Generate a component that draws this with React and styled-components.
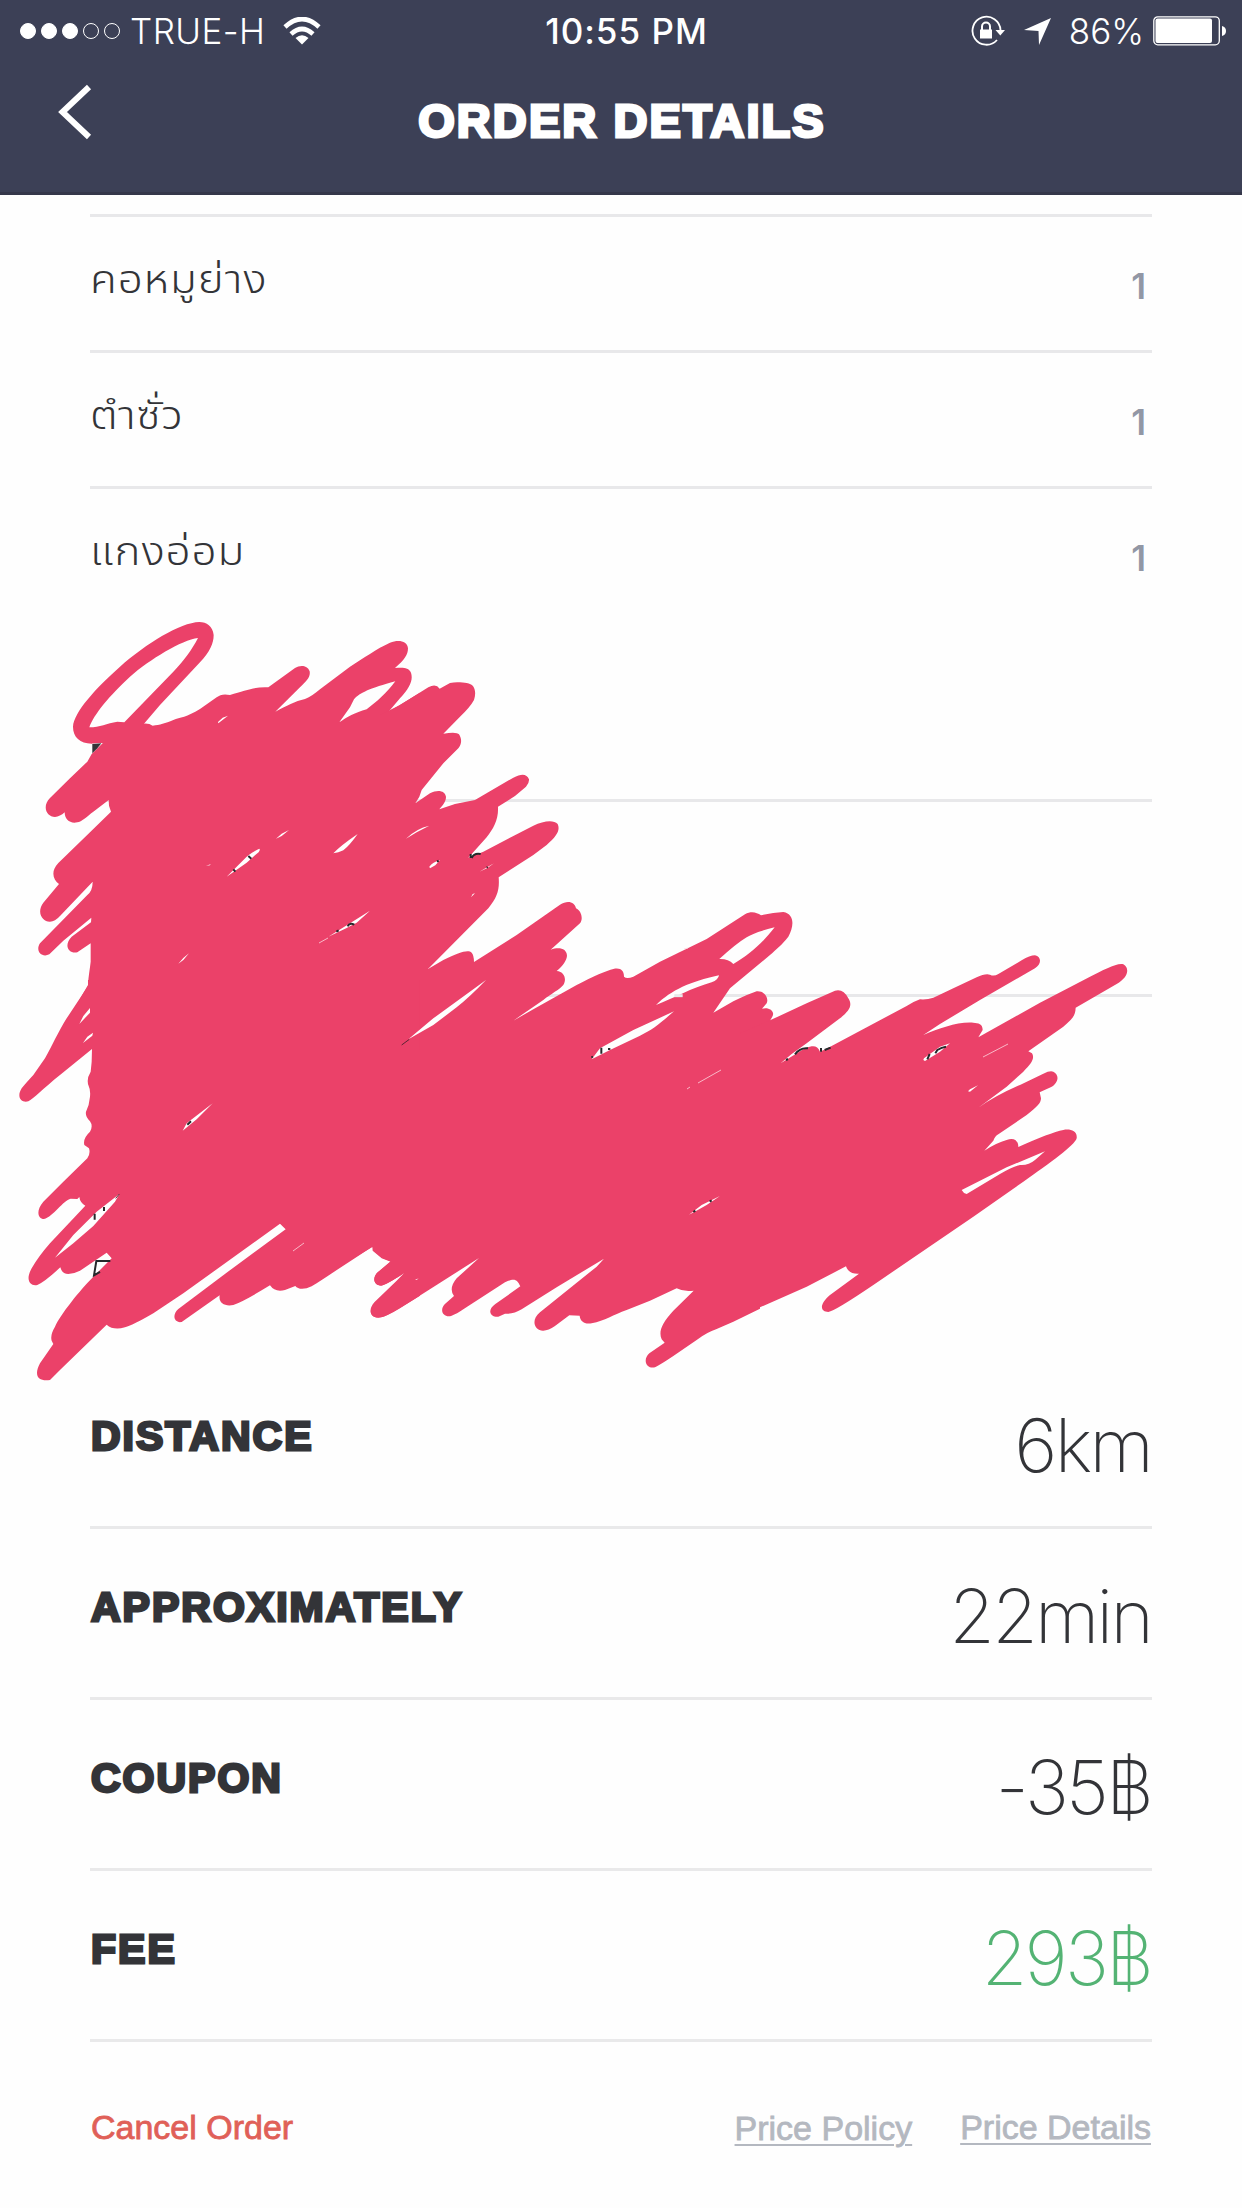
import React from "react";
import styled, { createGlobalStyle } from "styled-components";

const Global = createGlobalStyle`
  * { box-sizing: border-box; }
  body { margin: 0; background: #fefefe; }
`;

const Screen = styled.div`
  position: relative;
  width: 1242px;
  height: 2208px;
  overflow: hidden;
  background: #fefefe;
  color: #333438;
  font-family: "Inter", "Liberation Sans", sans-serif;
`;

const Header = styled.header`
  height: 195px;
  background: #3c4056;
  border-bottom: 3px solid #35374a;
  color: #fff;
`;

const StatusBar = styled.div`
  display: grid;
  grid-template-columns: 1fr auto 1fr;
  align-items: center;
  height: 62px;
  padding: 0 15px 0 20px;
`;

const StatusGroup = styled.div`
  display: flex;
  align-items: center;
  justify-content: ${(p) => (p.$end ? "flex-end" : "flex-start")};
`;

const Signal = styled.div`
  display: flex;
  gap: 5px;
  margin-right: 10px;
`;

const Dot = styled.i`
  width: 16px;
  height: 16px;
  border-radius: 50%;
  border: 1px solid #fff;
  background: ${(p) => (p.$on ? "#fff" : "transparent")};
`;

const StatusText = styled.span`
  display: block;
  font-size: 35px;
  line-height: 62px;
  white-space: nowrap;
  font-weight: ${(p) => p.$weight || 330};
  letter-spacing: ${(p) => p.$track || 0}px;
  margin-right: ${(p) => p.$after || 0}px;
  padding-left: ${(p) => p.$before || 0}px;
`;

const Icon = styled.svg`
  display: block;
  flex: none;
  margin-right: ${(p) => p.$after || 0}px;
`;

const TitleBar = styled.div`
  display: grid;
  grid-template-columns: 120px 1fr 120px;
  align-items: start;
  height: 130px;
`;

const Back = styled.button`
  display: block;
  padding: 20px 0 0 56px;
  border: 0;
  background: none;
`;

const Title = styled.h1`
  margin: 0;
  text-align: center;
  font-family: "Liberation Sans", Arial, sans-serif;
  font-size: 47px;
  line-height: 60px;
  padding: 29px 0 0 2px;
  font-weight: 700;
  letter-spacing: 2.1px;
  -webkit-text-stroke: 3px currentColor;
  white-space: nowrap;
`;

const Content = styled.main`
  display: flex;
  flex-direction: column;
  padding: 19px 90px 0;
`;

const Item = styled.div`
  display: flex;
  justify-content: space-between;
  height: 136px;
  border-top: 3px solid #e8e8ea;
`;

const ItemName = styled.span`
  font-family: "Noto Sans Thai", "Noto Sans", sans-serif;
  font-size: 40px;
  font-weight: 360;
  line-height: 60px;
  padding-top: 34px;
  letter-spacing: 0.8px;
  transform: scaleX(1.1);
  transform-origin: left;
`;

const ItemCount = styled.span`
  font-size: 35px;
  line-height: 60px;
  padding: 39px 6px 0 0;
  font-weight: 600;
  color: #9297a5;
`;

const Blank = styled.div`
  height: ${(p) => p.$h}px;
  border-bottom: ${(p) => (p.$line ? "3px solid #e8e8ea" : "0")};
`;

const Summary = styled.div`
  display: flex;
  justify-content: space-between;
  height: 171px;
  border-bottom: 3px solid #e9e9ea;
`;

const Label = styled.span`
  font-family: "Liberation Sans", Arial, sans-serif;
  font-size: 41px;
  line-height: 60px;
  padding: 48px 0 0 1px;
  font-weight: 700;
  white-space: nowrap;
  letter-spacing: 2px;
  -webkit-text-stroke: 2.8px currentColor;
`;

const Value = styled.span`
  font-size: 74px;
  line-height: 90px;
  padding: 42px 1px 0 0;
  font-weight: 240;
  white-space: nowrap;
  color: ${(p) => (p.$green ? "#54b374" : "#333438")};
  letter-spacing: -2.8px;
`;

const Footer = styled.footer`
  display: flex;
  align-items: flex-start;
  padding: 55px 1px 0;
  font-family: "Liberation Sans", sans-serif;
  font-size: 34px;
  line-height: 60px;
`;

const Cancel = styled.a`
  flex: 1;
  color: #e06058;
  -webkit-text-stroke: 0.8px currentColor;
`;

const Link = styled.a`
  margin-left: ${(p) => p.$gap || 0}px;
  padding-top: ${(p) => p.$drop || 0}px;
  color: #b4b8c0;
  text-decoration: underline;
  text-decoration-thickness: 2px;
  text-underline-offset: 4px;
  -webkit-text-stroke: 0.8px currentColor;
`;

const Overlay = styled.svg`
  position: absolute;
  left: 0;
  top: 0;
  pointer-events: none;
`;

const patches = [
  {
    x: 0, y: 600,
    shape:
      "M1260 278L1165 336L1200 295C1230 262 1240 240 1233 218C1225 200 1205 203 1185 204C1213 180 1224 165 1224 145C1222 122 1195 118 1170 128C1130 146 1090 175 1050 200L960 268C945 280 930 292 915 297C885 303 860 318 826 335L900 262C920 243 932 232 929 214C922 195 900 195 885 204L805 262C765 260 740 270 690 285C672 281 660 284 650 292L600 327C560 352 540 352 520 360C495 370 480 375 458 377Q448 370 432 371L480 315L600 187C630 155 641 130 641 105C638 78 620 66 598 66C540 68 440 130 360 200C290 262 222 335 219 380C219 412 240 430 275 431L308 429L275 462L262 485L210 535L150 594C125 620 140 650 165 651Q180 650 194 637C194 658 210 672 232 667C245 665 260 650 280 635L326 600L327 617L333 635L270 697L175 789C152 813 158 838 177 852L130 908C108 938 128 966 150 965Q165 965 180 948L278 845Q278 872 262 885L120 1030C105 1052 125 1075 148 1063L190 1022L274 953L273 967L215 1010C190 1036 205 1062 232 1057L272 1030V1085C270 1105 265 1130 264 1155L238 1200H1235V400Z",
  },
  {
    x: 400, y: 600,
    shape:
      "M-60 345L0 315L85 262Q108 250 119 266L150 249C170 244 190 248 200 249C225 252 230 275 222 300Q210 322 180 350L130 401Q170 394 177 403C188 420 183 435 175 445L130 490L65 570L58 590L46 610L90 580C115 567 135 573 138 590C138 605 130 612 118 628L165 612L225 600L340 533C365 520 380 521 387 538Q388 550 378 560L345 588L294 620C296 660 280 685 260 712L205 773L250 755L400 677C430 663 460 658 473 672C481 690 472 708 440 735L400 765L296 832C299 870 292 892 265 925L84 1107L130 1080C180 1055 205 1048 215 1058Q222 1066 222 1086L350 1005L480 914C505 898 525 908 528 925C545 933 550 958 540 970L452 1049C480 1040 500 1047 501 1067C500 1080 490 1097 470 1113C495 1115 500 1140 490 1155C480 1168 455 1180 430 1200L340 1262L400 1228L530 1155C580 1129 620 1112 640 1107C662 1102 672 1112 672 1130Q680 1138 700 1130L780 1085L920 1017L1035 943C1055 932 1070 938 1083 946Q1120 938 1150 936C1185 942 1182 980 1165 1010C1145 1035 1130 1047 1110 1065L990 1165L940 1238L1000 1204Q1050 1180 1070 1174C1095 1172 1107 1195 1100 1210L1086 1226C1105 1220 1125 1232 1118 1248L1110 1262V1500H-60Z",
  },
  {
    x: 0, y: 980,
    shape:
      "M264 0V18L200 115C175 155 155 200 135 235L100 285Q75 312 65 325C48 352 65 370 85 364C100 357 130 325 180 285L276 207L275 245L272 275Q258 298 266 318Q272 330 270 350Q268 375 258 395Q255 410 270 424Q280 438 270 455Q248 475 253 495L267 505Q272 520 262 535L190 605L130 665C108 690 112 716 132 717C160 710 190 660 212 656L232 657L238 651Q240 668 256 677L150 790Q115 830 95 865C75 900 90 920 112 915Q135 905 181 862Q186 882 205 882Q225 880 240 872L320 818L335 835L280 890C240 930 180 1005 165 1040Q150 1065 155 1082L160 1092L120 1150C100 1188 115 1205 150 1200L180 1170L320 1034Q340 1052 375 1042Q400 1035 460 1000L550 940L840 731L857 748L700 863L535 987C515 1005 522 1030 545 1026L659 946C655 970 675 980 700 975Q730 965 810 916Q825 938 855 930L886 918Q895 930 920 925C940 918 960 902 980 890L1117 800L1118 812L1145 835L1172 845L1130 880C1115 900 1125 918 1145 916Q1160 913 1215 878L1190 905L1125 970C1100 995 1115 1018 1145 1012Q1170 1003 1260 947V0Z",
  },
  {
    x: 340, y: 1050,
    shape:
      "M0 0V648L98 590L100 600L125 623L152 634L113 667C95 685 103 708 125 707Q145 702 195 667L170 692L103 757C80 783 95 806 120 802Q140 800 180 775L417 624L350 685Q325 715 342 738L314 763C295 785 315 805 335 797Q350 792 370 778L495 697C525 682 532 690 541 709L466 762C440 780 450 802 475 800L495 791Q520 793 545 778L650 712L792 626L770 650L600 787C570 812 585 843 610 842Q625 842 645 828L688 796L719 797C720 812 732 824 755 820C795 812 820 794 860 780L930 752L1010 715Q1030 726 1061 722L1000 782C965 820 955 845 965 868L974 878L928 910C905 932 922 958 945 952Q955 948 1000 918L1070 870Q1100 847 1130 837L1180 815L1260 776V0Z",
  },
  {
    x: 740, y: 900,
    shape:
      "M0 400V1253L60 1222L200 1160L318 1099C325 1118 340 1122 357 1121L270 1185C235 1215 242 1236 265 1236Q285 1233 400 1155L700 950L850 845C930 790 1005 735 1010 715C1013 692 990 686 970 690Q930 698 835 741C835 720 820 712 800 720Q770 728 733 752L760 722Q765 708 775 703L860 645C890 622 903 610 903 595L899 577L932 562C955 550 960 525 940 515Q930 511 910 521L840 555Q770 585 715 623L800 560L850 515C875 490 885 475 876 460L865 454L970 380C1000 355 1006 345 1007 323L1130 252C1165 232 1170 205 1150 193C1130 188 1090 211 1050 230L900 308L715 412L728 390C728 370 715 370 700 368C650 365 600 385 550 405L600 372L720 300L885 205C905 193 905 170 885 166Q870 166 845 181L775 222Q762 230 750 224Q735 220 710 232L640 265L580 293Q560 300 540 298Q520 305 500 318L265 443L240 455Q232 436 215 439Q205 440 190 448L122 490L155 462L200 430L300 355C330 330 338 315 325 295Q310 265 285 272L200 310L90 361Z",
  },
];

const gaps = [
  {
    x: 0, y: 600,
    shape:
      "M268 382C280 345 330 285 390 230C450 178 545 120 594 114C575 150 555 178 520 215L373 367L352 365C320 370 300 382 268 382ZM1018 367L1050 322L1062 298C1080 278 1110 265 1186 244C1160 280 1130 305 1100 328C1065 338 1040 352 1018 367ZM654 366L668 353L684 347L655 370ZM828 716L845 701L867 690L845 708ZM680 830L740 770Q770 748 778 746Q784 752 765 766L740 788ZM1000 760Q1020 738 1073 702Q1050 735 1030 751Q1015 758 1000 760ZM618 797L632 793L630 796ZM985 1010L1050 970L1110 932L1070 968L1040 984ZM535 1091Q550 1072 567 1060L550 1080ZM276 431L308 429L276 460Z",
    marks: "M745 768L754 776M700 808L706 815M1009 995L1016 991M1043 979Q1048 967 1063 974",
    solid: "M277 432L304 430L292 445L277 460Z",
  },
  {
    x: 400, y: 600,
    shape:
      "M958 1077Q1010 1030 1040 1012Q1060 998 1124 982C1085 1032 1050 1062 1000 1092Q985 1076 958 1077ZM768 1215C815 1170 870 1145 957 1126Q955 1140 935 1147C880 1162 820 1195 768 1215ZM575 1378L600 1345L700 1290L822 1234C780 1270 760 1288 720 1307L630 1350ZM25 1318L100 1255L258 1140Q210 1190 170 1222L100 1275ZM18 716Q50 685 88 677L50 697ZM88 800Q98 787 120 780L106 796L90 805ZM238 815L282 790L262 804ZM213 892L218 882L225 880Z",
    marks: "M604 1343V1361M624 1347H631M574 1372L579 1370M112 781L115 786M212 762V774M215 774Q222 758 242 762M260 803L263 801",
    fine: "M5 1335L28 1318",
    line: "M823 1187H848",
  },
  {
    x: 0, y: 980,
    shape:
      "M238 132L250 108L270 84V98ZM249 189L262 170L279 158L277 167ZM548 452L560 430L638 370L590 418ZM165 833L220 765L290 695L358 642L345 665L280 738L220 790Z",
    marks: "M562 434L573 424M284 701V719M312 681V693M331 843H289L282 886L300 876",
    fine: "M347 655L358 642",
  },
  {
    x: 340, y: 1050,
    shape: "M1047 494L1085 465L1140 438L1100 465L1068 483ZM225 690L236 685L230 690Z",
    marks: "M1060 486L1066 482M1109 455L1115 451",
  },
  {
    x: 740, y: 900,
    shape:
      "M665 870L800 802L915 754L885 780Q865 797 840 795Q820 798 780 822L680 882Q670 880 665 870ZM550 480L552 475L600 440L630 430L600 455L555 483ZM684 574L690 568L714 556L690 575Z",
    marks: "M562 478L569 462M586 460L592 450Q605 442 618 440M165 463Q180 442 204 445M138 480L144 477M243 444V455M254 450L272 443",
  },
];

const hairlines =
  "M688 948L684 949M319 943L328 938M293 1251L304 1243M983 1057L1008 1044M698 1083L721 1070M687 1089L690 1087";

const Scribble = () => (
  <Overlay width="1242" height="2208" viewBox="0 0 1242 2208">
    {patches.map((p, i) => (
      <path key={i} d={p.shape} fill="#eb4169" transform={`translate(${p.x} ${p.y}) scale(.33333)`} />
    ))}
    {gaps.map((g, i) => (
      <g key={i} transform={`translate(${g.x} ${g.y}) scale(.33333)`} fill="none">
        <path d={g.shape} fill="#fefefe" />
        {g.line && <path d={g.line} stroke="#e8e8ea" strokeWidth="9" />}
        {g.solid && <path d={g.solid} fill="#333438" />}
        {g.fine && <path d={g.fine} stroke="#5a2433" strokeWidth="3" />}
        <path d={g.marks} stroke="#26292c" strokeWidth="6" />
      </g>
    ))}
    <path d={hairlines} stroke="#fbd5de" strokeWidth=".8" fill="none" />
  </Overlay>
);

const items = ["คอหมูย่าง", "ตำซั่ว", "แกงอ่อม"];

const totals = [
  { label: "DISTANCE", value: "6km" },
  { label: "APPROXIMATELY", value: "22min" },
  { label: "COUPON", value: "-35฿" },
  { label: "FEE", value: "293฿", green: true },
];

export default function App() {
  return (
    <Screen>
      <Global />
      <Header>
        <StatusBar>
          <StatusGroup>
            <Signal>
              {[1, 1, 1, 0, 0].map((on, i) => (
                <Dot key={i} $on={on} />
              ))}
            </Signal>
            <StatusText $after={18} $track={0.4}>TRUE-H</StatusText>
            <Icon width="38" height="28" viewBox="0 0 38 28" fill="none" stroke="#fff">
              <path d="M2 10Q19 -6 36 10" strokeWidth="4.6" />
              <path d="M8 17Q19 7 30 17" strokeWidth="4.6" />
              <path d="M12.500 21Q19 15.500 25.500 21L19 27.500Z" fill="#fff" stroke="none" />
            </Icon>
          </StatusGroup>
          <StatusText $weight={500} $track={1} $before={6}>10:55 PM</StatusText>
          <StatusGroup $end>
            <Icon $after={19} width="34" height="32" viewBox="0 0 34 32" fill="none" stroke="#fff" strokeWidth="1.8">
              <path d="M29.500 15A14 14 0 1 0 26 25" />
              <path d="M24.500 15H34L29.300 20.500Z" fill="#fff" stroke="none" />
              <path d="M9 14.500H21V23.500H9Z" fill="#fff" stroke="none" />
              <path d="M11 15V11.500A4 4 0 0 1 19 11.500V15" strokeWidth="2" />
            </Icon>
            <Icon $after={18} width="27" height="27" viewBox="0 0 27 27">
              <path d="M27 0L15 27L14.500 13L0 12Z" fill="#fff" />
            </Icon>
            <StatusText $after={9}>86%</StatusText>
            <Icon width="74" height="30" viewBox="0 0 74 30">
              <rect x=".8" y=".8" width="65.500" height="28" rx="4" fill="none" stroke="#fff" strokeWidth="1.3" />
              <rect x="2.500" y="2.500" width="56.500" height="24.600" rx="2" fill="#fff" />
              <path d="M69 10Q73 11 73 15T69 20Z" fill="#fff" />
            </Icon>
          </StatusGroup>
        </StatusBar>
        <TitleBar>
          <Back aria-label="Back">
            <Icon width="38" height="60" viewBox="0 0 38 60">
              <path d="M33 5L6.500 30L33 55" fill="none" stroke="#fff" strokeWidth="6" />
            </Icon>
          </Back>
          <Title>ORDER DETAILS</Title>
        </TitleBar>
      </Header>
      <Content>
        {items.map((name) => (
          <Item key={name}>
            <ItemName>{name}</ItemName>
            <ItemCount>1</ItemCount>
          </Item>
        ))}
        <Blank $h={180} $line />
        <Blank $h={195} $line />
        <Blank $h={361} />
        {totals.map((t) => (
          <Summary key={t.label}>
            <Label>{t.label}</Label>
            <Value $green={t.green}>{t.value}</Value>
          </Summary>
        ))}
        <Footer>
          <Cancel>Cancel Order</Cancel>
          <Link $drop={1}>Price Policy</Link>
          <Link $gap={48}>Price Details</Link>
        </Footer>
      </Content>
      <Scribble />
    </Screen>
  );
}
